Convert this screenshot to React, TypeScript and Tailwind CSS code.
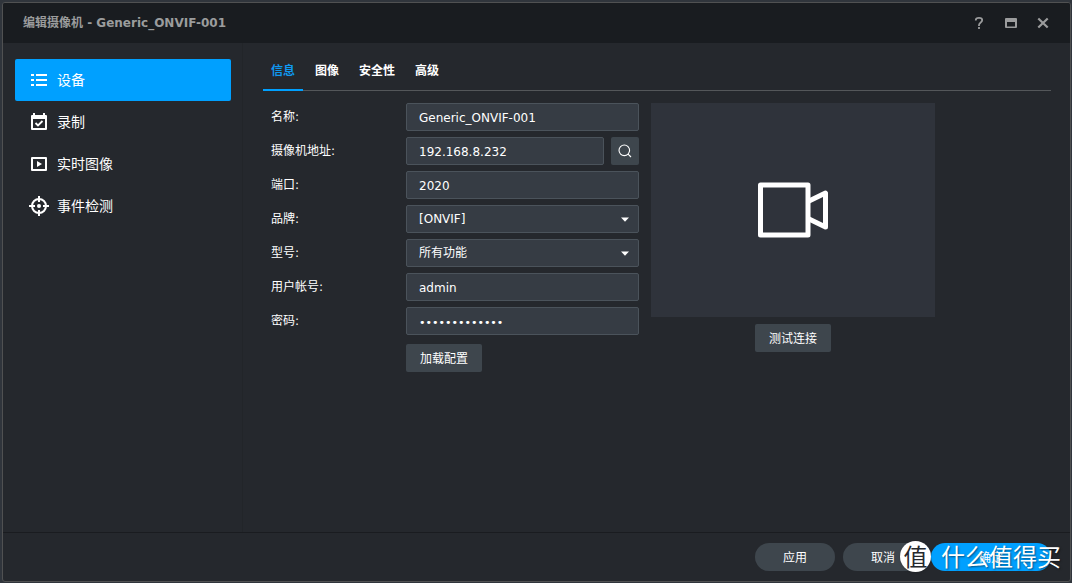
import React from 'react';

const fieldClass =
  'h-7 w-full min-w-0 rounded-[2px] border border-[#4b535b] bg-[#363c44] px-3 text-white outline-none';

const inputClass = `${fieldClass} pt-[2px]`;

const buttonClass = 'h-7 rounded-[2px] bg-[#3e464d] text-xs text-white';

const pillClass = 'h-7 rounded-full pt-[2px]';

const NAV_ITEMS = [
  { label: '设备', icon: <ListIcon />, active: true },
  { label: '录制', icon: <CalendarIcon />, active: false },
  { label: '实时图像', icon: <PlayIcon />, active: false },
  { label: '事件检测', icon: <TargetIcon />, active: false },
];

const TABS = ['信息', '图像', '安全性', '高级'];

export default function App() {
  return (
    <div className="min-h-screen flex bg-[#30353c] p-[2px] pr-px pb-px font-['DejaVu_Sans','Noto_Sans_CJK_SC',sans-serif] text-xs text-white">
      <div className="relative flex flex-1 flex-col rounded-[3px] border border-[#505152] bg-[#25282d]">
        <TitleBar />
        <div className="flex flex-1">
          <Sidebar />
          <main className="flex-1 min-w-0 pl-5 pr-[19px] pt-2">
            <Tabs />
            <div className="flex items-start gap-3 pt-3">
              <CameraForm />
              <Preview />
            </div>
          </main>
        </div>
        <footer className="flex justify-end gap-2 border-t border-[#1a1c20] py-[10px] pr-[19px]">
          <button type="button" className={`${pillClass} w-20 bg-[#3e464d]`}>应用</button>
          <button type="button" className={`${pillClass} w-20 bg-[#3e464d]`}>取消</button>
          <button type="button" className={`${pillClass} w-[120px] bg-[#00a0ff]`}>确定</button>
        </footer>
        <Watermark />
      </div>
    </div>
  );
}

const TitleBar: React.FC = () => (
  <header className="flex h-10 items-center justify-between rounded-t-[2px] bg-[#191c20] pl-5 pr-[19px] text-[#9b9c9d]">
    <h1 className="text-xs font-bold">编辑摄像机 - Generic_ONVIF-001</h1>
    <div className="flex items-center gap-4">
      <button type="button" aria-label="帮助" className="flex size-4 items-center justify-center">
        <svg width="16" height="16" viewBox="0 0 16 16" fill="none" stroke="currentColor" strokeWidth="1.800">
          <path d="M4.800 5.500V5q0-2.200 3.200-2.200t3.200 2.200q0 1.400-1.500 2.400T8 10v1" />
          <path d="M8 12v2" />
        </svg>
      </button>
      <button type="button" aria-label="最大化" className="flex size-4 items-center justify-center">
        <svg width="16" height="16" viewBox="0 0 16 16" fill="currentColor">
          <path fillRule="evenodd" d="M3 3h10q1 0 1 1v8q0 1-1 1H3q-1 0-1-1V4q0-1 1-1zM4 7v4.500h8V7z" />
        </svg>
      </button>
      <button type="button" aria-label="关闭" className="flex size-4 items-center justify-center">
        <svg width="16" height="16" viewBox="0 0 16 16" fill="none" stroke="currentColor" strokeWidth="2.200">
          <path d="M3.300 3.500l9.400 9M12.700 3.500l-9.400 9" />
        </svg>
      </button>
    </div>
  </header>
);

const Sidebar: React.FC = () => (
  <nav className="w-[240px] shrink-0 border-r border-[#222529] py-4 pl-3 pr-[11px]">
    {NAV_ITEMS.map((item) => (
      <a
        key={item.label}
        href="#"
        className={`flex h-[42px] items-center gap-2 rounded-[2px] px-[14px] text-sm ${item.active ? 'bg-[#00a0ff]' : ''}`}
      >
        {item.icon}
        {item.label}
      </a>
    ))}
  </nav>
);

const Tabs: React.FC = () => (
  <div role="tablist" className="flex gap-1 border-b border-[#54575a] text-xs">
    {TABS.map((tab, i) => (
      <button
        key={tab}
        type="button"
        role="tab"
        aria-selected={i === 0}
        className={`-mb-px h-10 border-b-2 px-2 pt-px font-bold ${i === 0 ? 'border-[#00a0ff] text-[#0f98f0]' : 'border-transparent'}`}
      >
        {tab}
      </button>
    ))}
  </div>
);

const Row: React.FC<{ label: string; id: string; children: React.ReactNode }> = ({ label, id, children }) => (
  <div className="flex items-center">
    <label htmlFor={id} className="w-[135px] shrink-0">{label}:</label>
    <div className="relative flex flex-1 min-w-0 gap-[7px]">{children}</div>
  </div>
);

const SelectField: React.FC<{ id: string; value: string }> = ({ id, value }) => (
  <>
    <select id={id} className={`${fieldClass} appearance-none`} defaultValue={value}>
      <option>{value}</option>
    </select>
    <svg className="pointer-events-none absolute right-[10px] top-3" width="8" height="5" viewBox="0 0 8 5" fill="currentColor">
      <path d="M0 .5h8L4 4.800z" />
    </svg>
  </>
);

const CameraForm: React.FC = () => (
  <form className="flex w-[376px] shrink-0 flex-col gap-[6px] pl-2">
    <Row label="名称" id="name">
      <input id="name" className={inputClass} defaultValue="Generic_ONVIF-001" />
    </Row>
    <Row label="摄像机地址" id="address">
      <input id="address" className={inputClass} defaultValue="192.168.8.232" />
      <button type="button" aria-label="搜索" className={`${buttonClass} flex w-7 shrink-0 items-center justify-center`}>
        <svg width="14" height="14" viewBox="0 0 14 14" fill="none" stroke="currentColor" strokeWidth="1.100">
          <circle cx="6.300" cy="6.300" r="5.300" />
          <path d="M10.100 10.100L13 13" />
        </svg>
      </button>
    </Row>
    <Row label="端口" id="port">
      <input id="port" className={inputClass} defaultValue="2020" />
    </Row>
    <Row label="品牌" id="brand">
      <SelectField id="brand" value="[ONVIF]" />
    </Row>
    <Row label="型号" id="model">
      <SelectField id="model" value="所有功能" />
    </Row>
    <Row label="用户帐号" id="account">
      <input id="account" className={inputClass} defaultValue="admin" />
    </Row>
    <Row label="密码" id="password">
      <input id="password" type="password" className={`${inputClass} text-[11px]`} defaultValue="1234567890123" />
    </Row>
    <button type="button" className={`${buttonClass} ml-[135px] mt-[3px] w-[76px] pt-[2px]`}>加载配置</button>
  </form>
);

const Preview: React.FC = () => (
  <div className="flex w-[284px] flex-col items-center gap-[7px]">
    <div className="flex h-[214px] w-full items-center justify-center bg-[#2f333b]">
      <svg width="72" height="56" viewBox="0 0 72 56" fill="none" stroke="white" strokeWidth="5" strokeLinejoin="round">
        <path d="M3.500 3h47.500v50h-47.500z" />
        <path d="M51 19.500L68.500 11v34L51 36.500" />
      </svg>
    </div>
    <button type="button" className={`${buttonClass} w-[76px] pt-[2px]`}>测试连接</button>
  </div>
);

const Watermark: React.FC = () => (
  <div className="pointer-events-none absolute bottom-[9px] right-[9px] flex items-center gap-[10px] font-['Noto_Sans_CJK_SC',sans-serif] text-2xl leading-8 text-white">
    <span className="flex size-[31px] items-center justify-center rounded-full bg-white text-[#25282d] shadow-sm">值</span>
    <span className="text-shadow-[1px_1px_2px_rgb(0_0_0/0.5)]">什么值得买</span>
  </div>
);

function ListIcon() {
  return (
    <svg width="20" height="20" viewBox="0 0 20 20" fill="currentColor">
      <path d="M2 4h3v2H2zM2 9h3v2H2zM2 14h3v2H2zM7 4h11v2H7zM7 9h11v2H7zM7 14h11v2H7z" />
    </svg>
  );
}

function CalendarIcon() {
  return (
    <svg width="20" height="20" viewBox="0 0 20 20" fill="currentColor">
      <path fillRule="evenodd" d="M4 1h2v2h8V1h2v2h1q1 0 1 1v13q0 1-1 1H3q-1 0-1-1V4q0-1 1-1h1zM4 7v9h12V7z" />
      <path d="M6.500 11l2.500 2.500 4.500-4.500" fill="none" stroke="currentColor" strokeWidth="1.800" />
    </svg>
  );
}

function PlayIcon() {
  return (
    <svg width="20" height="20" viewBox="0 0 20 20" fill="currentColor">
      <path fillRule="evenodd" d="M3 3h14q1 0 1 1v12q0 1-1 1H3q-1 0-1-1V4q0-1 1-1zM4 5v10h12V5z" />
      <path d="M8 7l5 3-5 3z" />
    </svg>
  );
}

function TargetIcon() {
  return (
    <svg width="20" height="20" viewBox="0 0 20 20" fill="none" stroke="currentColor" strokeWidth="2">
      <circle cx="10" cy="10" r="7" />
      <path d="M10 0v6M10 14v6M0 10h6M14 10h6" />
      <circle cx="10" cy="10" r="2" fill="currentColor" stroke="none" />
    </svg>
  );
}
